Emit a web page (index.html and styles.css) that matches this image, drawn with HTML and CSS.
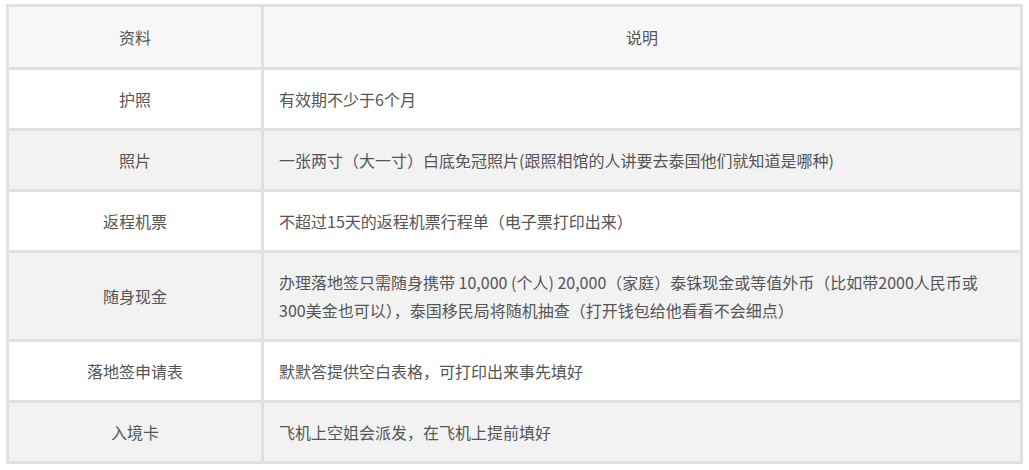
FILE: index.html
```html
<!DOCTYPE html>
<html lang="zh">
<head>
<meta charset="utf-8">
<title>资料说明</title>
<link rel="stylesheet" href="styles.css">
</head>
<body>
<table class="info-table">
  <thead>
    <tr><th class="col-name">资料</th><th class="col-desc">说明</th></tr>
  </thead>
  <tbody>
    <tr><td class="name">护照</td><td class="desc">有效期不少于6个月</td></tr>
    <tr><td class="name">照片</td><td class="desc">一张两寸（大一寸）白底免冠照片(跟照相馆的人讲要去泰国他们就知道是哪种)</td></tr>
    <tr><td class="name">返程机票</td><td class="desc">不超过15天的返程机票行程单（电子票打印出来）</td></tr>
    <tr><td class="name">随身现金</td><td class="desc">办理落地签只需随身携带 10,000 (个人) 20,000（家庭）泰铢现金或等值外币（比如带2000人民币或<br>300美金也可以），泰国移民局将随机抽查（打开钱包给他看看不会细点）</td></tr>
    <tr><td class="name">落地签申请表</td><td class="desc">默默答提供空白表格，可打印出来事先填好</td></tr>
    <tr><td class="name">入境卡</td><td class="desc">飞机上空姐会派发，在飞机上提前填好</td></tr>
  </tbody>
</table>
</body>
</html>
```

FILE: styles.css
```css
html, body {
  margin: 0;
  padding: 0;
  background: #ffffff;
}
body {
  padding: 4px 6px;
  font-family: "Noto Sans CJK SC", "Noto Sans", "Liberation Sans", sans-serif;
  font-size: 16px;
  color: #555555;
}
.info-table {
  width: 1017px;
  border-collapse: collapse;
  border: 3px solid #e1e1e1;
  table-layout: fixed;
}
.info-table th,
.info-table td {
  border: 3px solid #e1e1e1;
  line-height: 28px;
  vertical-align: middle;
}
.info-table th {
  font-weight: normal;
  background: #f7f7f7;
  text-align: center;
  padding: 16px 15px;
}
.col-name { width: 222px; }
.info-table td {
  padding: 15px 15px;
}
.info-table td.name {
  text-align: center;
}
.info-table td.desc {
  text-align: left;
}
.info-table tbody tr:nth-child(odd) { background: #ffffff; }
.info-table tbody tr:nth-child(even) { background: #f2f2f2; }
```
